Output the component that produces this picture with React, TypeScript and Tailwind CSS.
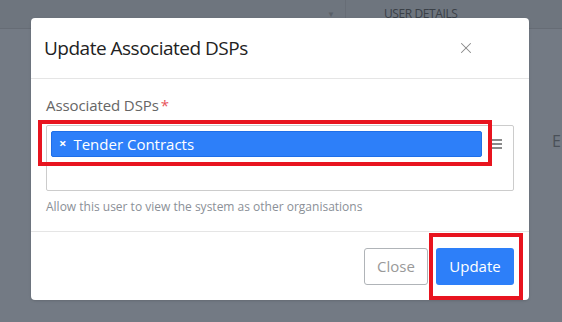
import React from "react";
import { X } from "lucide-react";

const font = { fontFamily: '"Open Sans", "Noto Sans", sans-serif' };

export default function App() {
    return (
        <div className="relative w-[562px] h-[322px] overflow-hidden bg-[#737a84]" style={font}>
            {/* page behind the backdrop */}
            <div className="flex h-[29px] border-b border-[#666c75] bg-[#6e757e]">
                <div className="w-[345px] flex justify-end items-center pr-[10px]">
                    <span className="text-[8px] text-[#5a6068]">▼</span>
                </div>
                <div className="flex-1 border-l border-[#676d76] pl-[38px] pt-[5px] text-[12px] text-[#3a4047] tracking-[-0.4px]">
                    USER DETAILS
                </div>
            </div>
            <div className="flex justify-end pt-[100px]">
                <span className="text-[16px] text-[#4a5058] pr-[1px]">E</span>
            </div>

            {/* modal */}
            <div className="absolute left-[31px] top-[18px] w-[498px] h-[282px] bg-white rounded-[4px] flex flex-col shadow-sm">
                <div className="h-[61px] flex items-center justify-between pl-[13px] pr-[54px] border-b border-[#e5e5e5]">
                    <h2 className="text-[19px] text-[#222] font-normal tracking-[-0.5px]">Update Associated DSPs</h2>
                    <X size={18} strokeWidth={1.4} className="text-[#888]" />
                </div>

                <div className="flex-1 px-[15px] pt-[16px] border-b border-[#e5e5e5]">
                    <div className="text-[15px] text-[#666] leading-[20px] tracking-[-0.1px]">
                        Associated DSPs<span className="text-[#e8525a] ml-[2px]">*</span>
                    </div>
                    <div className="mt-[10px] h-[66px] border border-[#ccc] rounded-[2px] flex items-start pl-[4px] pt-[5px] pr-[11px]">
                        <div className="flex-1 h-[26px] bg-[#2d7ff9] border border-[#1f6fe8] rounded-[2px] flex items-center pl-[7px] text-white text-[15px]">
                            <span className="text-[13px] font-bold mr-[7px]">×</span>
                            Tender Contracts
                        </div>
                        <div className="w-[20px] h-[26px] flex items-center justify-end">
                            <div className="flex flex-col gap-[2px]">
                                <span className="block w-[10px] h-[2px] bg-[#8a8a8a]" />
                                <span className="block w-[10px] h-[2px] bg-[#8a8a8a]" />
                                <span className="block w-[10px] h-[2px] bg-[#8a8a8a]" />
                            </div>
                        </div>
                    </div>
                    <div className="mt-[7px] text-[12px] text-[#8b9097]">
                        Allow this user to view the system as other organisations
                    </div>
                </div>

                <div className="h-[68px] flex items-center justify-end gap-[8px] pr-[15px]">
                    <button className="h-[37px] w-[64px] border border-[#b0b4b8] rounded-[3px] text-[15px] text-[#999] bg-white">
                        Close
                    </button>
                    <button className="h-[37px] w-[78px] rounded-[3px] text-[15px] text-white bg-[#2d7ff9]">
                        Update
                    </button>
                </div>
            </div>

            {/* highlight annotations */}
            <div className="absolute left-[38px] top-[120px] w-[454px] h-[46px] border-[4px] border-[#e8141f]" />
            <div className="absolute left-[429px] top-[233px] w-[94px] h-[67px] border-[4px] border-[#e8141f]" />
        </div>
    );
}
